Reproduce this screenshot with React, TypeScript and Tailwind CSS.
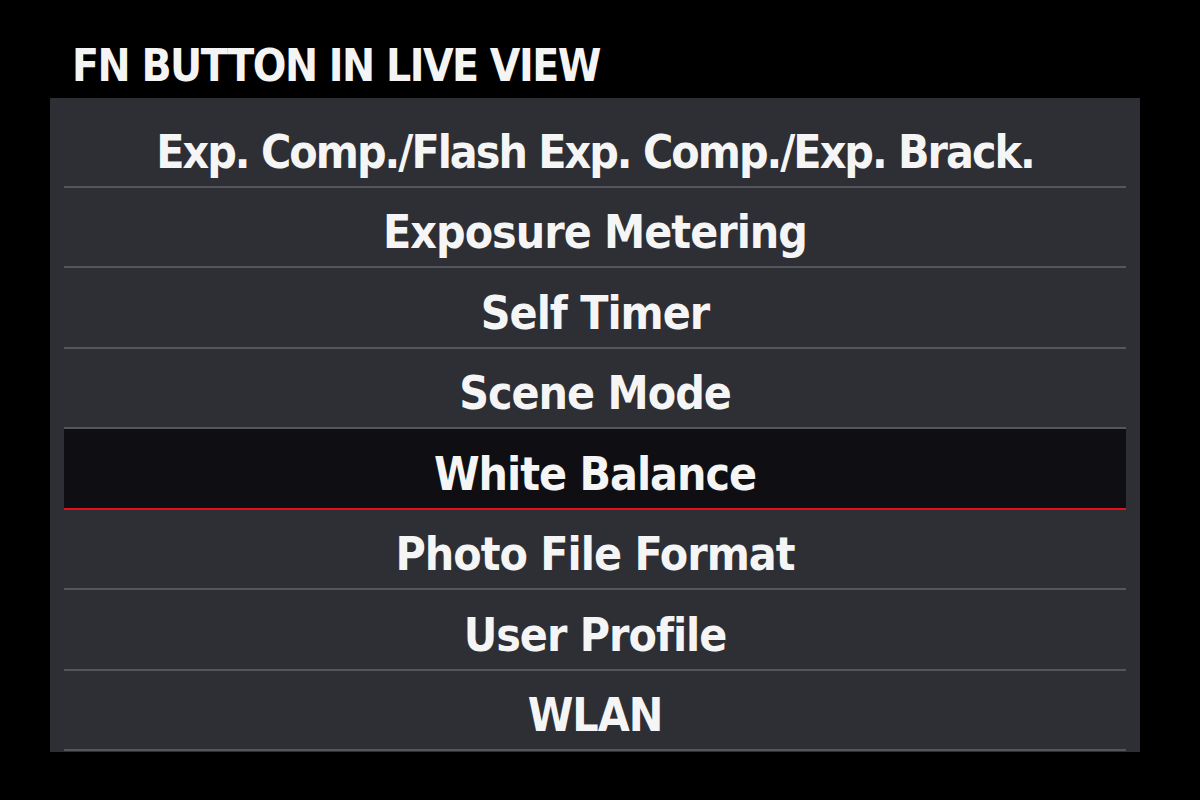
import React from "react";

const items = [
  "Exp. Comp./Flash Exp. Comp./Exp. Brack.",
  "Exposure Metering",
  "Self Timer",
  "Scene Mode",
  "White Balance",
  "Photo File Format",
  "User Profile",
  "WLAN",
];

export default function App() {
  return (
    <div
      className="w-[1200px] h-[800px] bg-black overflow-hidden"
      style={{ fontFamily: '"DejaVu Sans Condensed", "DejaVu Sans", sans-serif' }}
    >
      <div className="pl-[72px] pt-[40px] h-[98px] text-[44px] leading-[52px] font-bold text-[#f4f4f4] tracking-[-1.5px]">
        FN BUTTON IN LIVE VIEW
      </div>
      <div className="ml-[50px] w-[1090px] h-[654px] bg-[#2e2f34] pt-[9px] px-[14px]">
        {items.map((t, i) => {
          const selected = i === 4;
          return (
            <div
              key={t}
              className={
                "h-[80.5px] flex items-center justify-center pt-[12px] text-[46px] font-bold text-[#f5f5f5] " +
                (i === 0 ? "tracking-[-2px] " : "tracking-[-1px] ") +
                (selected
                  ? "bg-[#0f0f13] border-b-2 border-[#e3121a]"
                  : "border-b-2 border-[#55565c]")
              }
            >
              {t}
            </div>
          );
        })}
      </div>
    </div>
  );
}
